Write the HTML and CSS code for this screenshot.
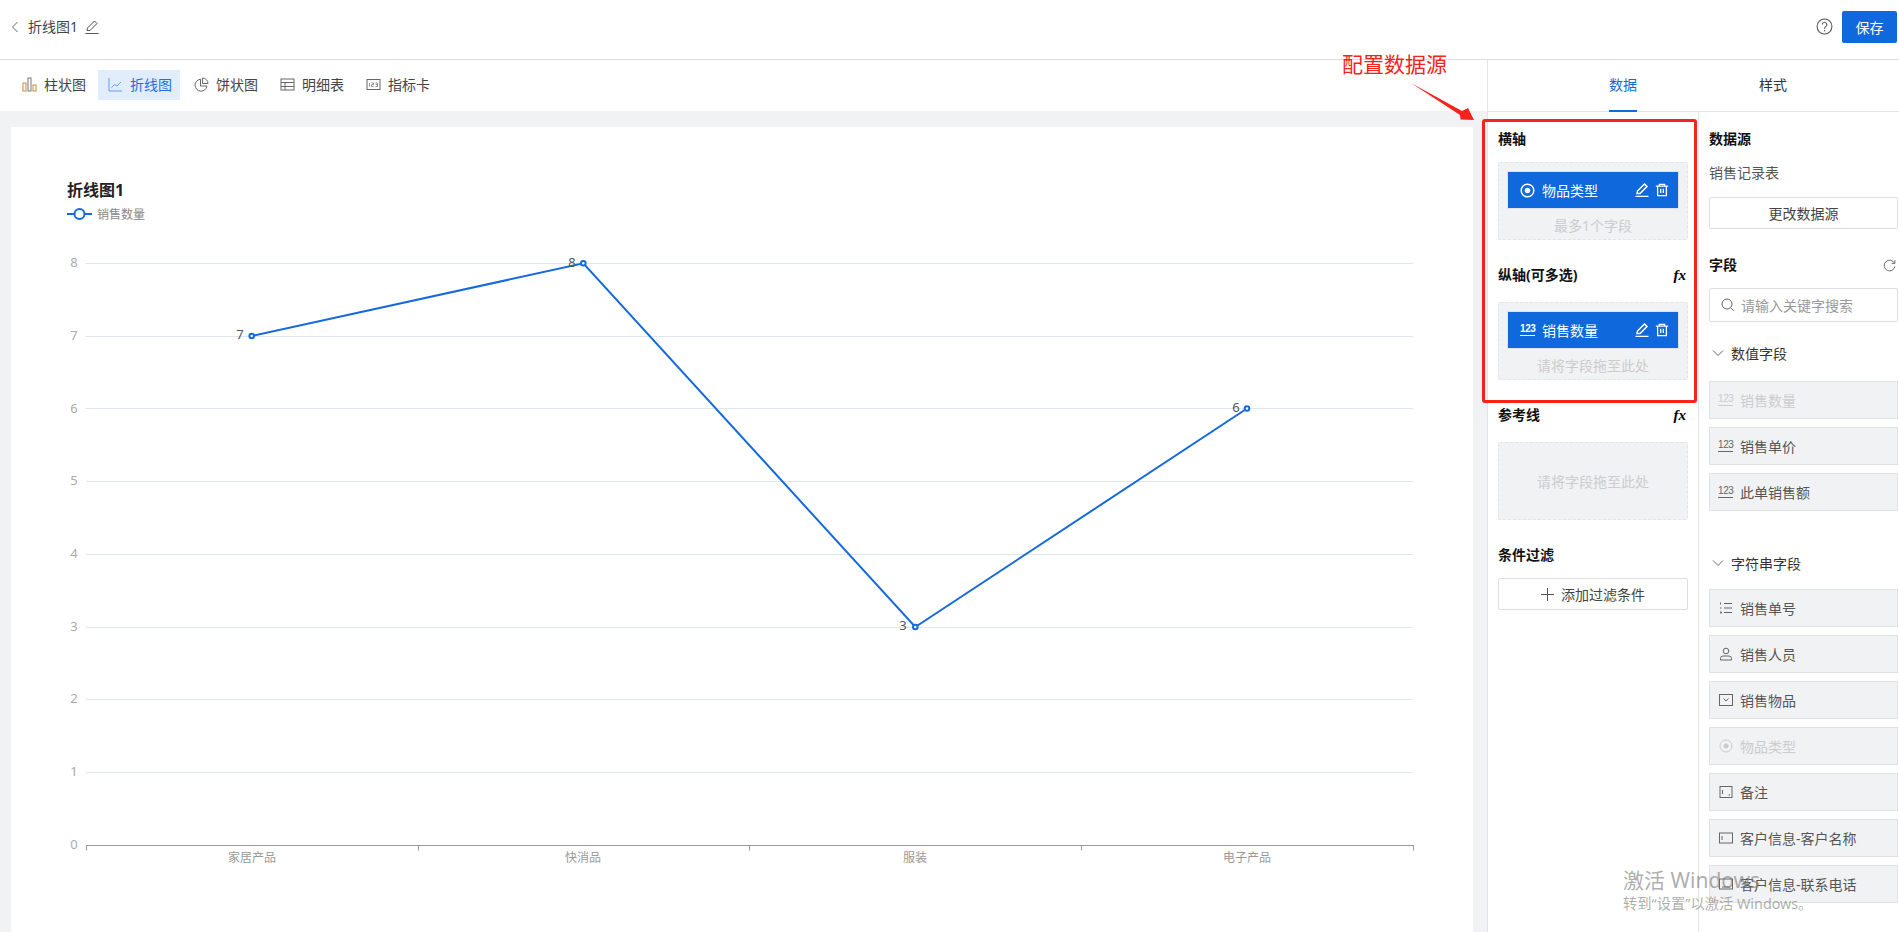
FILE: index.html
```html
<!DOCTYPE html>
<html lang="zh">
<head>
<meta charset="utf-8">
<title>折线图1</title>
<link rel="stylesheet" href="styles.css">
</head>
<body>
<div class="app">
  <header class="topbar">
    <div class="topbar-left">
      <svg class="ic-back" viewBox="0 0 8 12"><path d="M6.500 1 1.500 6l5 5"/></svg>
      <span class="chart-name">折线图1</span>
      <svg class="ic-16" viewBox="1 1 14 14"><path d="M3 11.500 3.500 9 10.500 2l2.500 2.500-7 7zM1.500 14.500h13"/></svg>
    </div>
    <div class="topbar-right">
      <svg class="ic-help" viewBox="0 0 16 16"><circle cx="8" cy="8" r="7"/><path d="M5.800 6.200a2.200 2.200 0 1 1 3.400 1.900c-.8.500-1.200.9-1.200 1.900"/><path d="M8 11.300v1.200"/></svg>
      <button class="btn-save">保存</button>
    </div>
  </header>

  <div class="body">
    <main class="main">
      <nav class="chart-types">
        <a class="ctype"><svg class="ic-15" viewBox="0 0 15 15"><rect class="o" x="1" y="6" width="3" height="8"/><rect class="g" x="6" y="1" width="3" height="13"/><rect class="o" x="11" y="8" width="3" height="6"/></svg>柱状图</a>
        <a class="ctype active"><svg class="ic-15" viewBox="0 0 15 15"><path d="M1 1v13h13M3.500 10.500l3-3 2.500 1.500 4-4"/></svg>折线图</a>
        <a class="ctype"><svg class="ic-15" viewBox="0 0 15 15"><path d="M6.500 2.200A6 6 0 1 0 13 9H6.500z"/><path d="M8.500 1a5.500 5.500 0 0 1 5.500 5.500H8.500z"/></svg>饼状图</a>
        <a class="ctype"><svg class="ic-15" viewBox="0 0 15 15"><rect x="1" y="2" width="13" height="11"/><path d="M1 5.500h13M1 9.500h13M5 5.500v7.500"/></svg>明细表</a>
        <a class="ctype"><svg class="ic-15" viewBox="0 0 15 15"><rect x="1" y="2.500" width="13" height="10"/><path class="thin" d="M3.500 6v3.500M5.500 6H7.500v1.700H5.500v1.800h2M9.500 6h2v3.500h-2M9.800 7.700h1.700"/></svg>指标卡</a>
      </nav>
      <section class="canvas">
        <div class="card">
          <h2 class="card-title">折线图1</h2>
          <div class="legend">
            <svg class="legend-mark" viewBox="0 0 25 12"><path d="M0 6h25"/><circle cx="12.500" cy="6" r="5"/></svg>
            <span>销售数量</span>
          </div>
          <svg class="plot" viewBox="0 0 1462 805" width="1462" height="805">
            <g class="grid">
              <path d="M75 136.500H1402M75 209.500H1402M75 281.500H1402M75 354.500H1402M75 427.500H1402M75 500.500H1402M75 572.500H1402M75 645.500H1402"/>
            </g>
            <g class="ylab">
              <text x="63" y="139.500">8</text><text x="63" y="212.500">7</text><text x="63" y="285.500">6</text><text x="63" y="357.500">5</text><text x="63" y="430.500">4</text><text x="63" y="503.500">3</text><text x="63" y="575.500">2</text><text x="63" y="648.500">1</text><text x="63" y="721.500">0</text>
            </g>
            <path class="axis" d="M75 718.500H1403M75.500 718.500v5M407.500 718.500v5M738.500 718.500v5M1070.500 718.500v5M1402.500 718.500v5"/>
            <g class="xlab">
              <text x="241" y="735">家居产品</text><text x="572" y="735">快消品</text><text x="904" y="735">服装</text><text x="1236" y="735">电子产品</text>
            </g>
            <polyline class="line" points="240.700,209 572.300,136.300 904.300,500 1236,281.500"/>
            <g class="dots">
              <circle cx="240.700" cy="209" r="2.300"/><circle cx="572.300" cy="136.300" r="2.300"/><circle cx="904.300" cy="500" r="2.300"/><circle cx="1236" cy="281.500" r="2.300"/>
            </g>
            <g class="vals">
              <text x="229" y="212">7</text><text x="561" y="139.500">8</text><text x="892" y="503">3</text><text x="1225" y="284.500">6</text>
            </g>
          </svg>
        </div>
      </section>
    </main>

    <aside class="panel">
      <div class="tabs">
        <div class="tab active">数据</div>
        <div class="tab">样式</div>
      </div>
      <div class="panel-cols">
        <div class="col-config">
          <h3 class="sec-title first">横轴</h3>
          <div class="drop">
            <div class="pill">
              <svg class="ic-15" viewBox="0 0 15 15"><circle cx="7.500" cy="7.500" r="6.300"/><circle class="f" cx="7.500" cy="7.500" r="2.800"/></svg>
              <span class="pill-name">物品类型</span>
              <svg class="ic-14" viewBox="1 1 14 14"><path d="M3 11.500 3.500 9 10.500 2l2.500 2.500-7 7zM1.500 14.500h13"/></svg>
              <svg class="ic-14" viewBox="0 0 16 16"><path d="M1 3.500h14M5 3.500V1.500h6v2M3 3.500v11h10v-11M6.500 6.500v5M9.500 6.500v5"/></svg>
            </div>
            <div class="drop-hint">最多1个字段</div>
          </div>
          <div class="sec-row"><h3 class="sec-title">纵轴(可多选)</h3><span class="fx">fx</span></div>
          <div class="drop">
            <div class="pill">
              <span class="num-ic">123</span>
              <span class="pill-name">销售数量</span>
              <svg class="ic-14" viewBox="1 1 14 14"><path d="M3 11.500 3.500 9 10.500 2l2.500 2.500-7 7zM1.500 14.500h13"/></svg>
              <svg class="ic-14" viewBox="0 0 16 16"><path d="M1 3.500h14M5 3.500V1.500h6v2M3 3.500v11h10v-11M6.500 6.500v5M9.500 6.500v5"/></svg>
            </div>
            <div class="drop-hint">请将字段拖至此处</div>
          </div>
          <div class="sec-row"><h3 class="sec-title">参考线</h3><span class="fx">fx</span></div>
          <div class="drop empty">请将字段拖至此处</div>
          <h3 class="sec-title filter">条件过滤</h3>
          <button class="btn-outline add"><svg class="ic-plus" viewBox="0 0 13 13"><path d="M6.500 0v13M0 6.500h13"/></svg>添加过滤条件</button>
        </div>

        <div class="col-fields">
          <h3 class="sec-title first">数据源</h3>
          <div class="src-name">销售记录表</div>
          <button class="btn-outline wide">更改数据源</button>
          <div class="sec-row fields-head"><h3 class="sec-title">字段</h3>
            <svg class="ic-refresh" viewBox="0 0 14 14"><path d="M12.300 4.500A5.800 5.800 0 1 0 12.800 8"/><path d="M12.800 1.200v3.500H9.300"/></svg>
          </div>
          <div class="search"><svg class="ic-search" viewBox="0 0 14 14"><circle cx="6" cy="6" r="5"/><path d="m9.800 9.800 3 3"/></svg><span>请输入关键字搜索</span></div>
          <div class="group-head"><svg class="ic-chev" viewBox="0 0 12 8"><path d="m1 1.500 5 5 5-5"/></svg>数值字段</div>
          <div class="field-list">
            <div class="field off"><span class="num-ic">123</span>销售数量</div>
            <div class="field"><span class="num-ic">123</span>销售单价</div>
            <div class="field"><span class="num-ic">123</span>此单销售额</div>
          </div>
          <div class="group-head second"><svg class="ic-chev" viewBox="0 0 12 8"><path d="m1 1.500 5 5 5-5"/></svg>字符串字段</div>
          <div class="field-list tight">
            <div class="field"><svg class="ic-14" viewBox="0 0 14 14"><path d="M5 2.500h8M5 7h8M5 11.500h8M1.500 1.500v2M1 7h1.500M1 11h1.500v1H1"/></svg>销售单号</div>
            <div class="field"><svg class="ic-14" viewBox="0 0 14 14"><circle cx="7" cy="4" r="2.800"/><path d="M1.500 13v-1.500a2.500 2.500 0 0 1 2.500-2.500h6a2.500 2.500 0 0 1 2.500 2.500V13z"/></svg>销售人员</div>
            <div class="field"><svg class="ic-14" viewBox="0 0 14 14"><rect x=".5" y="1.500" width="13" height="11"/><path d="m4.500 5.500 2.500 2.500 2.500-2.500"/></svg>销售物品</div>
            <div class="field off"><svg class="ic-14" viewBox="0 0 14 14"><circle cx="7" cy="7" r="6"/><circle class="f" cx="7" cy="7" r="2.500"/></svg>物品类型</div>
            <div class="field"><svg class="ic-14" viewBox="0 0 14 14"><rect x="1" y="1.500" width="12" height="11"/><path d="M3.500 5v4M9.500 10h1.500"/></svg>备注</div>
            <div class="field"><svg class="ic-14" viewBox="0 0 14 14"><rect x=".5" y="2" width="13" height="10"/><path d="M3 5v4"/></svg>客户信息-客户名称</div>
            <div class="field"><svg class="ic-14" viewBox="0 0 14 14"><rect x=".5" y="2" width="13" height="10"/><path d="M3 10h8"/></svg>客户信息-联系电话</div>
          </div>
        </div>
      </div>
    </aside>
  </div>
</div>

<div class="callout">配置数据源</div>
<svg class="callout-arrow" viewBox="0 0 70 40" width="70" height="40"><polygon points="0,0 51,28 57,25 63,37 49.500,36.500 49,32"/></svg>
<div class="callout-box"></div>

<div class="watermark">
  <div class="wm-1">激活 Windows</div>
  <div class="wm-2">转到“设置”以激活 Windows。</div>
</div>
</body>
</html>
```

FILE: styles.css
```css
* { box-sizing: border-box; }
html, body { margin: 0; height: 100%; overflow: hidden; }
body {
  font-family: "Noto Sans", "Noto Sans CJK SC", "Liberation Sans", sans-serif;
  font-size: 14px;
  color: #333;
  background: #fff;
  position: relative;
}
svg { fill: none; stroke: currentColor; flex: none; display: block; }
h2, h3 { margin: 0; }
button { font: inherit; cursor: pointer; }

.app { display: flex; flex-direction: column; height: 932px; }

/* top bar */
.topbar {
  height: 60px; flex: none;
  display: flex; justify-content: space-between; align-items: center;
  padding: 0 2px 6px 11px;
  border-bottom: 1px solid #dcdfe3;
}
.topbar-left { display: flex; align-items: center; color: #444; }
.ic-back { width: 8px; height: 12px; color: #666; margin-right: 9px; }
.chart-name { margin-right: 7px; line-height: 20px; }
.ic-16 { width: 14px; height: 14px; color: #555; }
.topbar-right { display: flex; align-items: center; gap: 9px; }
.ic-help { width: 17px; height: 17px; color: #555; }
.btn-save {
  width: 55px; height: 32px; border: 0; border-radius: 2px;
  background: #0f68dc; color: #fff; padding: 0;
}

.body { flex: 1; display: flex; min-height: 0; }

/* main */
.main { flex: 1; min-width: 0; display: flex; flex-direction: column; }
.chart-types {
  height: 51px; flex: none; display: flex; align-items: center;
  padding: 0 0 1px 12px; gap: 4px; background: #fff;
}
.ctype {
  display: flex; align-items: center; gap: 7px;
  height: 30px; padding: 0 10px 2px; width: 82px;
  color: #444; white-space: nowrap;
}
.ctype svg { color: #666; }
.ctype svg .o { color: #c98a34; }
.ctype svg .g { color: #777; }
.ctype .thin { stroke-width: .7; }
.ctype.active { background: #e2edfb; color: #1f6fdc; }
.ctype.active svg { color: #6a9be6; }
.ic-15 { width: 15px; height: 15px; }

.canvas { flex: 1; min-height: 0; background: #f1f2f4; padding: 16px 0 0 11px; }
.card { background: #fff; width: 1462px; height: 100%; padding: 51px 0 0; position: relative; overflow: hidden; }
.card-title { font-size: 16px; font-weight: 700; color: #222; margin-left: 56px; line-height: 24px; }
.legend { display: flex; align-items: center; gap: 5px; margin-left: 56px; font-size: 12px; color: #888; height: 20px; margin-top: 2px; }
.legend-mark { width: 25px; height: 12px; color: #1469dc; stroke-width: 2; }
.legend-mark circle { fill: #fff; }
.plot { position: absolute; left: 0; top: 0; }
.grid path { stroke: #e1e5f0; stroke-width: 1; }
.ylab text { fill: #aaa; stroke: none; font-size: 13px; text-anchor: middle; }
.xlab text { fill: #999; stroke: none; font-size: 12px; text-anchor: middle; }
.axis { stroke: #999; stroke-width: 1; }
.line { stroke: #1469dc; stroke-width: 2; fill: none; }
.dots circle { fill: #fff; stroke: #1469dc; stroke-width: 2; }
.vals text { fill: #555; stroke: none; font-size: 13px; text-anchor: middle; }

/* panel */
.panel { width: 412px; flex: none; display: flex; flex-direction: column; border-left: 1px solid #e2e4e8; background: #fff; }
.tabs { height: 52px; flex: none; display: flex; border-bottom: 1px solid #e2e4e8; position: relative; }
.tab { line-height: 50px; color: #333; text-align: center; width: 150px; position: relative; }
.tab:first-child { margin-left: 60px; }
.tab.active { color: #1469dc; }
.tab.active::after { content: ""; position: absolute; left: 61px; width: 28px; height: 2px; bottom: -1px; background: #1469dc; }
.panel-cols { flex: 1; display: flex; min-height: 0; }
.col-config { width: 211px; flex: none; padding: 0 10px; border-right: 1px solid #e2e4e8; }
.col-fields { flex: 1; padding: 0 1px 0 10px; min-width: 0; }

.sec-title { font-size: 14px; font-weight: 700; color: #111; line-height: 20px; }
.sec-title.first { margin-top: 17px; }
.sec-row { display: flex; justify-content: space-between; align-items: center; height: 20px; margin-top: 25px; }
.sec-title.filter { margin-top: 25px; }
.fx { font: italic 700 15px/20px "Liberation Serif", serif; color: #000; margin-right: 2px; }

.drop {
  width: 190px; height: 78px; margin-top: 13px;
  background: #f1f2f4; border: 1px dashed #e2e4e8; border-radius: 2px;
  padding: 8px;
}
.sec-row + .drop { margin-top: 17px; }
.pill {
  height: 38px; display: flex; align-items: center; gap: 6px;
  background: #0f68dc; color: #fff; border: 1px solid #dfe3ea;
  padding: 0 9px 0 12px;
}
.pill svg { stroke-width: 1.500; }
.pill .num-ic { color: #fff; border-color: #fff; font-weight: 700; }
.pill-name { flex: 1; margin-left: 1px; }
.drop-hint { text-align: center; color: #ccc; line-height: 18px; margin-top: 8px; }
.drop.empty { display: flex; align-items: center; justify-content: center; color: #ccc; }

.btn-outline {
  display: flex; align-items: center; justify-content: center; gap: 7px;
  width: 190px; height: 32px; padding: 0; background: #fff; color: #444;
  border: 1px solid #dcdfe3; border-radius: 2px;
}
.btn-outline.wide { width: 189px; }
.btn-outline.add { margin-top: 13px; }
.ic-plus { width: 13px; height: 13px; color: #555; }
.src-name { color: #555; line-height: 20px; margin-top: 14px; margin-bottom: 14px; }
.fields-head { margin-top: 26px; margin-bottom: 13px; }
.ic-refresh { width: 13px; height: 13px; color: #666; margin-right: 2px; }
.search {
  display: flex; align-items: center; gap: 6px; height: 34px; width: 189px;
  border: 1px solid #dcdfe3; border-radius: 2px; padding-left: 11px; color: #999;
}
.ic-search { width: 14px; height: 14px; color: #666; }
.group-head { display: flex; align-items: center; gap: 7px; margin-top: 21px; padding-left: 3px; height: 20px; color: #333; }
.group-head.second { margin-top: 42px; }
.ic-chev { width: 12px; height: 8px; color: #666; }
.field-list { display: flex; flex-direction: column; gap: 8px; margin-top: 18px; }
.field-list.tight { margin-top: 16px; }
.field {
  display: flex; align-items: center; gap: 7px; height: 38px; width: 189px;
  background: #f1f2f4; border: 1px solid #dfe1e5; padding-left: 9px;
  color: #555; white-space: nowrap;
}
.field svg { color: #666; }
.field .f, .pill .f { fill: currentColor; stroke: none; }
.field.off { color: #ccc; }
.field.off svg, .field.off .num-ic { color: #ccc; border-color: #ccc; }
.field .num-ic { margin-left: -1px; }
.ic-14 { width: 14px; height: 14px; }
.num-ic {
  font: 10px/10px "Liberation Sans", sans-serif; width: 15px; flex: none; text-align: center;
  border-bottom: 1px solid #666; color: #666; letter-spacing: -.4px; padding-bottom: 1px;
}

/* annotation overlays */
.callout { position: absolute; left: 1342px; top: 50px; font-size: 21px; line-height: 28px; color: #f5231c; white-space: nowrap; }
.callout-arrow { position: absolute; left: 1411px; top: 83px; stroke: none; fill: #f5231c; }
.callout-box { position: absolute; left: 1482px; top: 119px; width: 215px; height: 284px; border: 3px solid #f5231c; border-radius: 3px; }

.watermark { position: absolute; left: 1623px; top: 867px; color: rgba(120,120,120,.6); white-space: nowrap; pointer-events: none; }
.wm-1 { font-size: 21px; line-height: 26px; }
.wm-2 { font-size: 14.300px; line-height: 20px; margin-top: 1px; }
```
